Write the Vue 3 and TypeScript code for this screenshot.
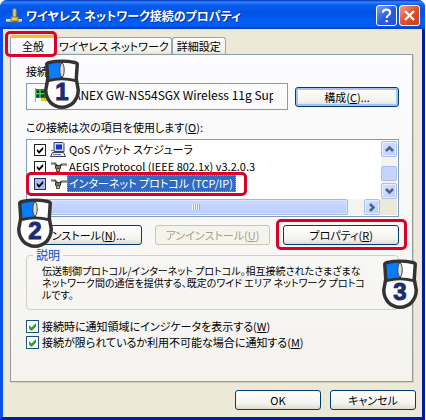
<script setup lang="ts">
import { h, ref } from 'vue'
import type { FunctionalComponent } from 'vue'

interface Item {
  id: string
  label: string
  kind: 'computer' | 'protocol'
  checked: boolean
}

const tabs: string[] = ['全般', 'ワイヤレス ネットワーク', '詳細設定']
const activeTab = ref(0)
const selected = ref('tcpip')
const showIcon = ref(true)
const notifyLimited = ref(true)

const items = ref<Item[]>([
  { id: 'qos', label: 'QoS パケット スケジューラ', kind: 'computer', checked: true },
  { id: 'aegis', label: 'AEGIS Protocol (IEEE 802.1x) v3.2.0.3', kind: 'protocol', checked: true },
  { id: 'tcpip', label: 'インターネット プロトコル (TCP/IP)', kind: 'protocol', checked: true },
])

const description: string[] = [
  '伝送制御プロトコル/インターネット プロトコル。相互接続されたさまざまな',
  'ネットワーク間の通信を提供する、既定のワイド エリア ネットワーク プロトコ',
  'ルです。',
]

const MouseStep: FunctionalComponent<{ step: number }> = (props) =>
  h('svg', { class: 'mouse', viewBox: '0 0 36 50', width: 36, height: 50, 'aria-hidden': 'true' }, [
    h('path', { d: 'M1 5Q1.500 2.500 5 1.800Q18 -.800 31 1.800Q34.500 2.500 35 5L34 20L36 31C36 42 28 50 18 50C8 50 0 42 0 31L2 20Z', fill: '#333' }),
    h('path', { d: 'M4.500 5.500Q10 4 17 3.800V18.500Q10 18.700 5.500 20Z', fill: '#087dff' }),
    h('path', { d: 'M19 3.800Q26 4 31.500 5.500L30.500 20Q26 18.700 19 18.500Z', fill: '#fff' }),
    h('ellipse', { cx: 18, cy: 11, rx: 2.2, ry: 7, fill: '#ddd', stroke: '#444', 'stroke-width': 1 }),
    h('path', { d: 'M5 23Q18 19.500 31 23L32.500 31C32.500 40 26 46.500 18 46.500C10 46.500 3.500 40 3.500 31Z', fill: '#fff' }),
    h('text', { x: 18, y: 41, 'text-anchor': 'middle', fill: '#1c2b73', stroke: '#1c2b73', 'stroke-width': 1, 'font-family': 'Liberation Sans, sans-serif', 'font-weight': 700, 'font-size': 24 }, String(props.step)),
  ])
MouseStep.props = ['step']
</script>

<template>
  <main class="window">
    <header class="titlebar">
      <svg class="title-icon" viewBox="0 0 16 16" width="16" height="16" aria-hidden="true">
        <path d="M7 1h3v9H7z" fill="#e8d36a" stroke="#a58c38" />
        <path d="M0 11h7v3H0zM11 11h5v3h-5z" fill="#d7dce0" />
        <path d="M0 14h16" stroke="#56606b" />
        <path d="M5 9h7v4H5z" fill="#f3c83b" stroke="#8b7530" />
      </svg>
      <h1>ワイヤレス ネットワーク接続のプロパティ</h1>
      <button class="caption help" type="button" aria-label="ヘルプ">
        <svg viewBox="0 0 21 21" width="19" height="19"><path d="M6.500 7.500Q6.500 4 10.500 4Q14.500 4 14.500 7.300Q14.500 9 12.500 10.300Q10.700 11.500 10.700 13.300M10.700 15.500V18" fill="none" stroke="#fff" stroke-width="2.400" /></svg>
      </button>
      <button class="caption close" type="button" aria-label="閉じる">
        <svg viewBox="0 0 21 21" width="19" height="19"><path d="M5.500 5.500L15.500 15.500M15.500 5.500L5.500 15.500" fill="none" stroke="#fff" stroke-width="2.600" /></svg>
      </button>
    </header>

    <div class="client">
      <div class="tabs" role="tablist">
        <div v-for="(tab, i) in tabs" :key="tab" class="tab-slot">
          <button class="tab" :class="{ active: i === activeTab }" type="button" role="tab" :aria-selected="i === activeTab" @click="activeTab = i">{{ tab }}</button>
          <span v-if="i === 0" class="marker tab-marker"></span>
        </div>
      </div>

      <section class="panel" role="tabpanel">
        <div class="method">接続方法:<MouseStep :step="1" class="mouse-one" /></div>
        <div class="device-row">
          <div class="device">
            <svg viewBox="0 0 16 14" width="16" height="14" aria-hidden="true">
              <path d="M0 1h16v9H0z" fill="#168a25" />
              <path d="M2 3h2v2H2zM6 3h3v2H6zM2 7h2v2H2zM6 7h3v2H6z" fill="#0a3d10" />
              <path d="M.500 0v14M5 1v9M0 5.500h10" fill="none" stroke="#74c36d" />
              <path d="M6 10h8v3H6z" fill="#e2ca22" />
            </svg>
            <span>PLANEX GW-NS54SGX Wireless 11g Super</span>
          </div>
          <button class="push default" type="button">構成(<u>C</u>)...</button>
        </div>

        <div id="items-label" class="items-label">この接続は次の項目を使用します(<u>O</u>):</div>
        <div class="list">
          <div class="list-body">
            <ul aria-labelledby="items-label">
              <li v-for="item in items" :key="item.id" :class="{ selected: item.id === selected }" @click="selected = item.id">
                <input :id="item.id" v-model="item.checked" type="checkbox" class="tick dark" />
                <svg v-if="item.kind === 'computer'" viewBox="0 0 17 16" width="17" height="16" aria-hidden="true">
                  <path d="M4 .500h9l1 1v8H4z" fill="#d5dae5" stroke="#39435f" />
                  <path d="M6 2.500h6v5H6z" fill="#1734d8" />
                  <path d="M2.500 10.500h11l2 4H.500z" fill="#eef0f5" stroke="#39435f" />
                  <path d="M1 8.500h3M3 12.500h8" stroke="#6974a0" />
                </svg>
                <svg v-else viewBox="0 0 17 16" width="17" height="16" aria-hidden="true">
                  <path d="M1 4.500h4l2 2M10 6.500l2-1h5" fill="none" stroke="#555" stroke-width="2" />
                  <path d="M1 4h3M12 5h5" stroke="#aaa" />
                  <path d="M5.500 6.500h5v3h-5z" fill="#777a62" stroke="#333" />
                  <path d="M6.500 9.500h3v3h-3z" fill="#c7b65b" stroke="#4a4632" />
                </svg>
                <label :for="item.id">{{ item.label }}</label>
                <span v-if="item.id === 'tcpip'" class="marker row-marker"></span>
              </li>
            </ul>
            <div class="vscroll">
              <button type="button" aria-label="上へ"><svg viewBox="0 0 9 6" width="9" height="6"><path d="M1 5L4.500 1.500L8 5" /></svg></button>
              <span class="vthumb"></span>
              <button type="button" aria-label="下へ"><svg viewBox="0 0 9 6" width="9" height="6"><path d="M1 1L4.500 4.500L8 1" /></svg></button>
            </div>
          </div>
          <div class="hscroll">
            <button type="button" aria-label="左へ"><svg viewBox="0 0 6 9" width="6" height="9"><path d="M5 1L1.500 4.500L5 8" /></svg></button>
            <span class="hthumb"><i></i></span>
            <button type="button" aria-label="右へ"><svg viewBox="0 0 6 9" width="6" height="9"><path d="M1 1L4.500 4.500L1 8" /></svg></button>
            <span class="corner"></span>
          </div>
        </div>

        <div class="actions">
          <div class="slot">
            <button class="push" type="button">インストール(<u>N</u>)...</button>
            <MouseStep :step="2" class="mouse-two" />
          </div>
          <div class="slot"><button class="push" type="button" disabled>アンインストール(<u>U</u>)</button></div>
          <div class="slot">
            <button class="push" type="button">プロパティ(<u>R</u>)</button>
            <span class="marker action-marker"></span>
          </div>
        </div>

        <fieldset>
          <legend>説明</legend>
          <p><span v-for="line in description" :key="line">{{ line }}</span></p>
          <MouseStep :step="3" class="mouse-three" />
        </fieldset>

        <div class="option">
          <input id="show-icon" v-model="showIcon" type="checkbox" class="tick" />
          <label for="show-icon">接続時に通知領域にインジケータを表示する(<u>W</u>)</label>
        </div>
        <div class="option">
          <input id="notify-limited" v-model="notifyLimited" type="checkbox" class="tick" />
          <label for="notify-limited">接続が限られているか利用不可能な場合に通知する(<u>M</u>)</label>
        </div>
      </section>

      <footer>
        <button class="push" type="button">OK</button>
        <button class="push" type="button">キャンセル</button>
      </footer>
    </div>
  </main>
</template>

<style>
body {
  margin: 0;
  background: #fff;
}
</style>

<style scoped>
* {
  box-sizing: border-box;
}
.window {
  margin-right: 1px;
  border: solid #0038d8;
  border-width: 0 3px 3px;
  border-left-color: #0a50ea;
  border-right-color: #001da0;
  border-bottom-color: #0020a8;
  border-radius: 7px 7px 0 0;
  background: #ece9d8;
  color: #000;
  font: 11px/16px "Noto Sans CJK JP", sans-serif;
  font-feature-settings: "palt";
  white-space: nowrap;
}
button {
  padding: 0;
  font: inherit;
  font-feature-settings: inherit;
  color: inherit;
}
.titlebar {
  display: flex;
  align-items: center;
  gap: 2px;
  height: 29px;
  margin: 0 -3px;
  padding: 2px 5px 0 6px;
  border-radius: 7px 7px 0 0;
  background: linear-gradient(#0831b8 0, #2c86ff 2px, #0a5cf0 5px, #0054e3 12px, #0060fa 23px, #0058ee 26px, #003cc4 29px);
}
h1 {
  flex: 1;
  margin: 0 0 0 2px;
  color: #fff;
  font-size: 12px;
  line-height: 20px;
  font-weight: 700;
  text-shadow: 1px 1px #0a2a8c;
}
.caption {
  display: grid;
  place-items: center;
  width: 21px;
  height: 21px;
  border: 1px solid #fff;
  border-radius: 3px;
}
.help {
  background: linear-gradient(135deg, #7da2f8, #2a5be4 50%, #2352d8);
}
.close {
  background: linear-gradient(135deg, #f0a089, #e0502c 50%, #c8401c);
}
.client {
  padding: 6px 9px 7px 7px;
}
.tabs {
  display: flex;
  align-items: flex-end;
  height: 19px;
}
.tab-slot {
  position: relative;
}
.tab {
  display: block;
  height: 17px;
  padding: 0 2px;
  border: 1px solid #91a7b4;
  border-bottom: 0;
  border-radius: 3px 3px 0 0;
  background: linear-gradient(#fff, #f2f1ea 80%, #e4e2d8);
  line-height: 17px;
}
.tab-slot:nth-child(3) .tab {
  padding: 0 4px;
}
.tab.active {
  position: relative;
  height: 20px;
  margin-bottom: -1px;
  padding: 0 11px;
  border-top: 3px solid #ffb62e;
  background: #fcfcfe;
  line-height: 17px;
}
.marker {
  position: absolute;
  z-index: 2;
  border: 3px solid #dc0028;
  border-radius: 5px;
  pointer-events: none;
}
.tab-marker {
  inset: -4px -1px -3px -5px;
}
.panel {
  padding: 8px 13px 31px 15px;
  border: 1px solid #919b9c;
  box-shadow: 1px 1px #d4d1c1;
  background: linear-gradient(#fcfcfe, #f4f3ee);
}
.mouse {
  position: absolute;
  z-index: 3;
  pointer-events: none;
}
.method {
  position: relative;
}
.mouse-one {
  left: 18px;
  top: -4px;
}
.device-row {
  display: flex;
  align-items: center;
  gap: 7px;
  margin-top: 4px;
}
.device {
  display: flex;
  align-items: center;
  flex: 1;
  min-width: 0;
  height: 27px;
  padding: 0 14px 4px 8px;
  border: 1px solid #7f9db9;
  font-size: 12px;
}
.device svg {
  flex: none;
}
.device span {
  margin-left: 8px;
  overflow: hidden;
}
.push {
  display: block;
  width: 100%;
  height: 20px;
  border: 1px solid #003c74;
  border-radius: 3px;
  background: linear-gradient(#fff, #f4f3ee 70%, #dedbd0);
  line-height: 18px;
}
.push.default {
  width: 104px;
  box-shadow: inset 0 0 0 2px #a4c0f4;
}
.push:disabled {
  border-color: #c9c7ba;
  background: #f5f4ea;
  color: #a1a192;
}
.items-label {
  margin-top: 9px;
}
.list {
  margin-top: 4px;
  padding: 1px;
  border: 1px solid #7f9db9;
  background: #fff;
}
.list-body {
  display: flex;
  height: 58px;
}
ul {
  flex: 1;
  min-width: 0;
  margin: 0;
  padding: 0;
  list-style: none;
}
li {
  position: relative;
  display: flex;
  align-items: center;
  height: 17px;
  padding-left: 6px;
}
li svg {
  margin: 0 0 0 4px;
}
li label {
  height: 17px;
  padding: 0 3px 0 2px;
  line-height: 17px;
}
.selected label {
  background: #316ac5;
  color: #fff;
  outline: 1px dotted #e09b40;
  outline-offset: -1px;
}
.tick {
  flex: none;
  width: 13px;
  height: 13px;
  margin: 0;
  appearance: none;
  border: 1px solid #1c5180;
  background: #fff;
}
.tick:checked {
  background: #fff url("data:image/svg+xml,%3Csvg xmlns='http://www.w3.org/2000/svg' viewBox='0 0 11 11'%3E%3Cpath d='M2 4L4.500 6.500L9 2V5.500L4.500 10L2 7.500z' fill='%2321a121'/%3E%3C/svg%3E");
}
.tick.dark {
  width: 12px;
  height: 12px;
  border-color: #222;
}
.tick.dark:checked {
  background-image: url("data:image/svg+xml,%3Csvg xmlns='http://www.w3.org/2000/svg' viewBox='0 0 11 11'%3E%3Cpath d='M2 4L4.500 6.500L9 2V5L4.500 9.500L2 7z' fill='%23000'/%3E%3C/svg%3E");
}
.selected .tick.dark {
  border-color: #17356b;
  background-color: #a9c3ee;
}
.row-marker {
  left: -2px;
  top: -3px;
  width: 221px;
  height: 24px;
}
.vscroll {
  display: flex;
  flex-direction: column;
  width: 16px;
  background: #f4f3ee;
}
.vscroll button,
.hscroll button {
  display: grid;
  place-items: center;
  flex: none;
  width: 16px;
  height: 16px;
  border: 1px solid #a9c0ee;
  border-radius: 2px;
  background: linear-gradient(135deg, #d6e2fe, #b8cbf8);
  box-shadow: inset 0 0 0 1px #e6eeff;
}
.vscroll path,
.hscroll path {
  fill: none;
  stroke: #4d6185;
  stroke-width: 2.5;
}
.vthumb {
  height: 15px;
  margin: auto 0 2px;
  border: 1px solid #a9c0ee;
  border-radius: 2px;
  background: #c4d4fc;
}
.hscroll {
  display: flex;
  height: 16px;
  background: #f4f3ee;
}
.hthumb {
  display: grid;
  place-items: center;
  flex: 1;
  margin-right: 16px;
  border: 1px solid #a0b5e8;
  border-radius: 2px;
  background: linear-gradient(#cbdafe, #bacdfb);
  box-shadow: inset 0 0 0 1px #dce7ff;
}
.hthumb i {
  width: 8px;
  height: 6px;
  background: repeating-linear-gradient(90deg, #eef4fe 0 1px, #8cb0f8 1px 2px);
}
.corner {
  width: 17px;
  background: #ece9d8;
}
.actions {
  display: flex;
  gap: 13px;
  margin-top: 8px;
}
.slot {
  position: relative;
  flex: 1;
}
.mouse-two {
  left: -9px;
  top: -27px;
}
.action-marker {
  inset: -6px -8px -5px -7px;
}
fieldset {
  position: relative;
  min-width: 0;
  margin: 3px 0 0;
  padding: 3px 0 8px 15px;
  border: 1px solid #d0d0bf;
  border-radius: 4px;
}
legend {
  margin-left: -9px;
  padding: 0 3px;
  color: #0046d5;
  font-size: 12px;
  line-height: 14px;
}
p {
  margin: 0;
}
p span {
  display: block;
  font-size: 10px;
  line-height: 12px;
}
.mouse-three {
  right: -20px;
  top: -3px;
}
.option {
  display: flex;
  align-items: center;
  gap: 3px;
  height: 16px;
}
fieldset + .option {
  margin-top: 8px;
}
footer {
  display: flex;
  justify-content: flex-end;
  gap: 9px;
  margin: 8px -3px 0 0;
}
footer .push {
  width: 86px;
}
</style>
